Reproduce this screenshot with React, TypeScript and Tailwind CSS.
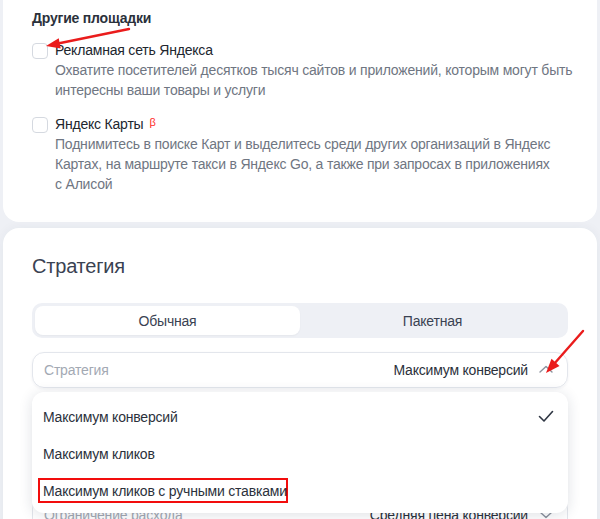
import React from "react";

function Checkbox() {
  return <div className="mt-[3px] h-4 w-4 shrink-0 rounded-[4px] border border-[#d5d9e0] bg-white" />;
}

function ChevronUp() {
  return (
    <svg width="14" height="8" viewBox="0 0 14 8" fill="none">
      <path d="M1 7L7 1.5L13 7" stroke="#8b929d" strokeWidth="1.4" strokeLinecap="round" strokeLinejoin="round" />
    </svg>
  );
}

function ChevronDown() {
  return (
    <svg width="14" height="8" viewBox="0 0 14 8" fill="none">
      <path d="M1 1L7 6.5L13 1" stroke="#8b929d" strokeWidth="1.4" strokeLinecap="round" strokeLinejoin="round" />
    </svg>
  );
}

export default function App() {
  return (
    <div
      className="relative h-[519px] w-[600px] overflow-hidden bg-[#eef0f5] px-[3px] text-[14px] leading-[20px] tracking-[-0.2px] text-[#21262e]"
      style={{ fontFamily: '"Liberation Sans", Arial, sans-serif' }}
    >
      {/* Card 1 */}
      <div className="rounded-b-[16px] bg-white px-[29px] pb-[28px] pt-[8px]">
        <div className="font-bold text-[#2b313b]">Другие площадки</div>
        <div className="mt-[12px] flex gap-[7px]">
          <Checkbox />
          <div className="whitespace-nowrap">
            <div>Рекламная сеть Яндекса</div>
            <div className="text-[#6f7682]">
              <div>Охватите посетителей десятков тысяч сайтов и приложений, которым могут быть</div>
              <div>интересны ваши товары и услуги</div>
            </div>
          </div>
        </div>
        <div className="mt-[14px] flex gap-[7px]">
          <Checkbox />
          <div className="whitespace-nowrap">
            <div className="flex items-start gap-[6px]">
              <span>Яндекс Карты</span>
              <span className="text-[11px] leading-[16px] text-[#ff2a2a]">β</span>
            </div>
            <div className="text-[#6f7682]">
              <div>Поднимитесь в поиске Карт и выделитесь среди других организаций в Яндекс</div>
              <div>Картах, на маршруте такси в Яндекс Go, а также при запросах в приложениях</div>
              <div>с Алисой</div>
            </div>
          </div>
        </div>
      </div>

      {/* Card 2 */}
      <div className="relative mt-[6px] h-[400px] rounded-t-[16px] bg-white px-[29px] pt-[24px] shadow-[0_0_12px_rgba(40,50,80,0.05)]">
        <div className="text-[20px] leading-[28px] text-[#3a4252]">Стратегия</div>

        <div className="mt-[23px] grid h-[35px] grid-cols-2 rounded-[10px] bg-[#eef0f5] p-[3px]">
          <div className="flex items-center justify-center rounded-[8px] bg-white text-[#3a4252] shadow-[0_1px_2px_rgba(0,0,0,0.04)]">
            Обычная
          </div>
          <div className="flex items-center justify-center text-[#3a4252]">Пакетная</div>
        </div>

        <div className="mt-[14px] flex h-[36px] items-center rounded-[12px] border border-[#e3e6ec] pl-[11px] pr-[14px] shadow-[0_1px_3px_rgba(30,40,70,0.06)]">
          <span className="text-[#a3a9b3]">Стратегия</span>
          <span className="ml-auto text-[#2b313b]">Максимум конверсий</span>
          <span className="ml-[11px] mb-[2px] flex">
            <ChevronUp />
          </span>
        </div>

        <div className="mt-[13px] h-[36px] rounded-[12px] border border-[#e3e6ec]" />
        <div className="mt-[13px] h-[36px] rounded-[12px] border border-[#e3e6ec]" />
        <div className="mt-[11px] flex h-[36px] items-center rounded-[12px] border border-[#e3e6ec] pl-[11px] pr-[14px]">
          <span className="text-[#a3a9b3]">Ограничение расхода</span>
          <span className="ml-auto text-[#2b313b]">Средняя цена конверсии</span>
          <span className="ml-[11px] flex">
            <ChevronDown />
          </span>
        </div>

        {/* Dropdown */}
        <div className="absolute left-[29px] top-[164px] h-[121px] w-[536px] rounded-[12px] bg-white pt-[6px] shadow-[0_2px_14px_rgba(30,40,70,0.14)]">
          <div className="flex h-[37px] items-center pl-[11px] pr-[14px] text-[#2b313b]">
            <span>Максимум конверсий</span>
            <svg className="ml-auto" width="16" height="13" viewBox="0 0 16 13" fill="none">
              <path d="M1.5 6.5L6 11L14.5 1.5" stroke="#2f3643" strokeWidth="1.6" strokeLinecap="round" strokeLinejoin="round" />
            </svg>
          </div>
          <div className="flex h-[37px] items-center pl-[11px] text-[#2b313b]">Максимум кликов</div>
          <div className="flex h-[37px] items-center pl-[6px] text-[#2b313b]">
            <span className="flex h-[25px] w-[250px] items-center whitespace-nowrap border-2 border-[#f20d0d] pl-[3px]">
              Максимум кликов с ручными ставками
            </span>
          </div>
        </div>
      </div>

      {/* Annotation arrows */}
      <svg className="pointer-events-none absolute left-0 top-0" width="600" height="519" viewBox="0 0 600 519">
        <line x1="129" y1="29" x2="58" y2="43.5" stroke="#ea1c1c" strokeWidth="2.4" strokeLinecap="round" />
        <polygon points="46,46 60.7,48.6 58.7,38.3" fill="#ea1c1c" />
        <line x1="583" y1="331" x2="554" y2="364" stroke="#ea1c1c" strokeWidth="2.4" strokeLinecap="round" />
        <polygon points="546,373 559.5,366 551.5,358.8" fill="#ea1c1c" />
      </svg>
    </div>
  );
}
